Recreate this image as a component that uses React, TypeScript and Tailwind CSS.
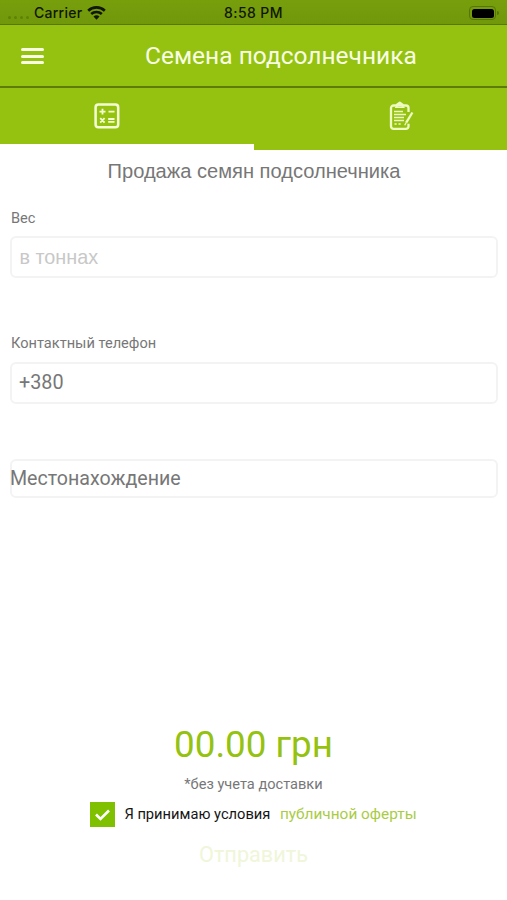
function StatusBar() {
  return (
    <div className="flex h-[25px] items-center justify-between border-b border-[#587803] bg-gradient-to-b from-[#779f0c] to-[#71970b] px-2 pt-[2px] font-['Inter',sans-serif] text-[14px] font-medium text-[#101600]">
      <div className="flex w-[120px] items-center">
        <div className="flex gap-[3px] pt-2">
          {[0, 1, 2, 3].map((dot) => (
            <span key={dot} className="size-[3px] rounded-full bg-[#5f8206]" />
          ))}
        </div>
        <span className="ml-[5px] leading-none tracking-[0.25px]">Carrier</span>
        <svg className="ml-[5px]" width="19" height="14" viewBox="0 0 19 14" fill="none" stroke="currentColor">
          <path d="M1.2 4.7a12 12 0 0 1 16.6 0" strokeWidth="2.6" />
          <path d="M4.2 8a7.7 7.7 0 0 1 10.6 0" strokeWidth="2.5" />
          <path d="M9.5 13.7 6.5 10.6a4.4 4.4 0 0 1 6 0z" fill="currentColor" stroke="none" />
        </svg>
      </div>
      <span className="leading-none tracking-[0.4px]">8:58 PM</span>
      <div className="flex w-[120px] items-center justify-end">
        <div className="h-[14px] w-[27px] rounded-[4px] border border-[#567506] p-[1.5px]">
          <div className="h-full rounded-[2.5px] bg-black" />
        </div>
        <span className="ml-px h-1 w-[1.5px] rounded-r bg-[#567506]" />
      </div>
    </div>
  );
}

function CalculatorIcon() {
  return (
    <svg width="26" height="26" viewBox="0 0 26 26" fill="none" stroke="#f4ffd4">
      <rect x="1.6" y="1.6" width="22.6" height="22.6" rx="2.8" strokeWidth="2.5" />
      <path d="M5.5 8.7h6M8.5 5.8v5.8M14.5 8.7h6M14.2 16h6.3M14.2 18.8h6.3M6.2 15.2l4.4 4.4M10.6 15.2l-4.4 4.4" strokeWidth="1.8" />
    </svg>
  );
}

function ClipboardIcon() {
  return (
    <svg width="26" height="30" viewBox="0 0 26 30" fill="none" stroke="#eefbc2" strokeLinejoin="round">
      <path d="M19.5 11V7a2.5 2.5 0 0 0-2.5-2.5h-2.5L10.8 1.8 7 4.5H4.6A2.6 2.6 0 0 0 2 7.1v18.2a2.5 2.5 0 0 0 2.5 2.5H17a2.5 2.5 0 0 0 2.5-2.5v-2.5" strokeWidth="2.3" />
      <path d="M6.5 6.5h8.6L10.8 3.2z" fill="#d9eda0" strokeWidth="1.2" />
      <path d="M5 10.5h9M5 13.5h12M5 16.5h10M5 19.5h10M5.5 23h2.2M9.5 23h2.2" strokeWidth="1.5" />
      <path d="m23.4 11.5-6.2 10.2" strokeWidth="2.3" />
      <path d="m17.2 21.5-1.5 2.7" strokeWidth="1.3" />
    </svg>
  );
}

function Tabs() {
  return (
    <div className="flex h-[62px] bg-[#95c211]">
      <button className="flex w-[254px] flex-col">
        <span className="flex h-14 w-[214px] items-center justify-center">
          <CalculatorIcon />
        </span>
        <span className="h-1.5 w-full bg-white" />
      </button>
      <button className="flex flex-1 justify-center pt-[13px] pl-[43px]">
        <ClipboardIcon />
      </button>
    </div>
  );
}

export default function App() {
  return (
    <div className="flex h-[900px] w-[507px] flex-col overflow-hidden bg-white font-['Roboto',sans-serif] text-[#777]">
      <StatusBar />

      <header className="flex h-[63px] items-center border-b-2 border-[#5d7c07] bg-[#95c211] pt-px pl-[21px]">
        <button className="flex w-[23px] flex-col gap-[3.5px]">
          <span className="h-[3px] w-full rounded-sm bg-[#f8ffe5]" />
          <span className="h-[3px] w-full rounded-sm bg-[#f8ffe5]" />
          <span className="h-[3px] w-full rounded-sm bg-[#f8ffe5]" />
        </button>
        <h1 className="ml-[101px] pt-px text-[24.5px] leading-none whitespace-nowrap text-[#f8ffe5]">Семена подсолнечника</h1>
      </header>

      <Tabs />

      <main className="flex flex-1 flex-col pr-[9px] pl-2.5">
        <h2 className="mt-[9px] text-center font-['Liberation_Sans',sans-serif] text-[20.1px] leading-6 whitespace-nowrap">
          Продажа семян подсолнечника
        </h2>

        <label className="mt-[25px] pl-px text-[14.6px] leading-5">Вес</label>
        <input
          className="mt-2 h-[42px] rounded-md border-2 border-[#f3f3f3] px-[7.5px] font-['Liberation_Sans',sans-serif] text-[19.8px] outline-none placeholder:text-[#c8c8c8]"
          placeholder="в тоннах"
        />

        <label className="mt-[55px] pl-px text-[14.6px] leading-5">Контактный телефон</label>
        <input
          className="mt-[9px] h-[42px] rounded-md border-2 border-[#f3f3f3] px-[7px] pb-px text-[19.8px] outline-none"
          defaultValue="+380"
        />

        <div className="mt-[55px] flex h-[39px] items-center rounded-md border-2 border-[#f3f3f3] text-[19.6px] leading-none">
          <span className="-ml-[2px] pt-px">Местонахождение</span>
        </div>

        <div className="mt-auto flex flex-col items-center pr-px">
          <p className="text-[36.8px] leading-[44px] text-[#95c211]">00.00 грн</p>
          <p className="mt-[7px] text-[14.6px] leading-5">*без учета доставки</p>
          <div className="mt-2 flex h-[25px] items-center text-[14.7px] leading-none whitespace-nowrap">
            <span className="flex size-[25px] items-center justify-center bg-[#7fc100]">
              <svg width="15" height="12" viewBox="0 0 15 12" fill="none" stroke="white" strokeWidth="2.6">
                <path d="m1 5.5 4.5 4.5L14 1.5" />
              </svg>
            </span>
            <span className="ml-[9px] text-[#151515]">Я принимаю условия</span>
            <a className="ml-[9.5px] text-[15.4px] text-[#aacb46]">публичной оферты</a>
          </div>
          <button className="mt-3.5 mb-[31px] text-[21.7px] leading-7 text-[#eff6d9]">Отправить</button>
        </div>
      </main>
    </div>
  );
}
